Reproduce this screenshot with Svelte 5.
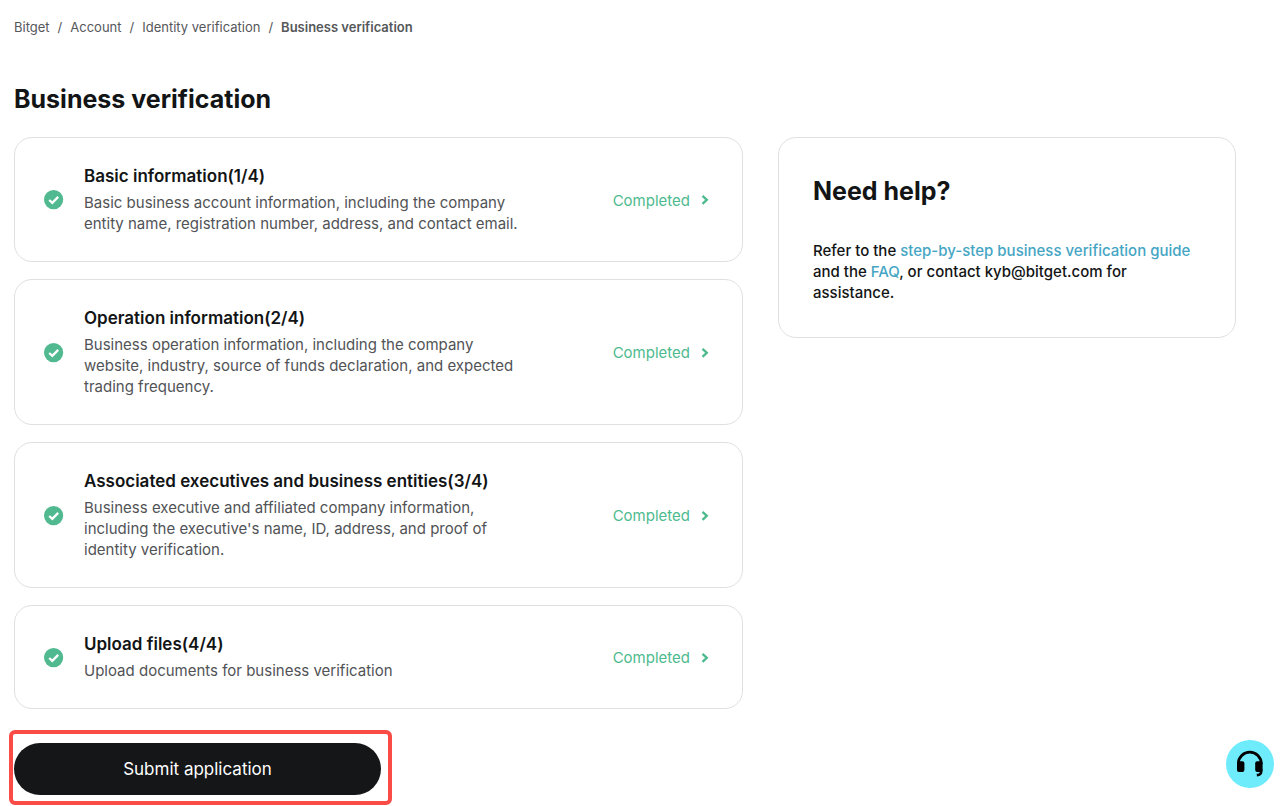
<script>
const crumbs = ['Bitget', 'Account', 'Identity verification'];

const steps = [
    {
        title: 'Basic information(1/4)',
        text: 'Basic business account information, including the company entity name, registration number, address, and contact email.',
        status: 'Completed',
    },
    {
        title: 'Operation information(2/4)',
        text: 'Business operation information, including the company website, industry, source of funds declaration, and expected trading frequency.',
        status: 'Completed',
    },
    {
        title: 'Associated executives and business entities(3/4)',
        text: "Business executive and affiliated company information, including the executive's name, ID, address, and proof of identity verification.",
        status: 'Completed',
    },
    {
        title: 'Upload files(4/4)',
        text: 'Upload documents for business verification',
        status: 'Completed',
    },
]
</script>

<div class="page">
    <nav class="crumbs" aria-label="Breadcrumb">
        {#each crumbs as crumb}
            <a href="#top">{crumb}</a>
            <span>/</span>
        {/each}
        <strong>Business verification</strong>
    </nav>

    <h1>Business verification</h1>

    <div class="columns">
        <main>
            {#each steps as step}
                <section class="card step">
                    <svg class="check" viewBox="0 0 20 20" aria-hidden="true">
                        <circle cx="9.6" cy="9.6" r="9.6" fill="#50b990" />
                        <path d="M5.2 10 8.3 12.8 14.2 6.9" fill="none" stroke="#fff" stroke-width="2.3" />
                    </svg>
                    <div class="info">
                        <h2>{step.title}</h2>
                        <p>{step.text}</p>
                    </div>
                    <a class="status" href="#step">
                        {step.status}
                        <svg viewBox="0 0 8 12" aria-hidden="true">
                            <path d="M1.5 1.8 5.8 5.8 1.5 9.8" fill="none" stroke="currentColor" stroke-width="2.3" />
                        </svg>
                    </a>
                </section>
            {/each}

            <div class="submit">
                <button type="button">Submit application</button>
            </div>
        </main>

        <aside class="card help">
            <h2>Need help?</h2>
            <p>
                Refer to the <a href="#guide">step-by-step business verification guide</a> and the
                <a href="#faq">FAQ</a>, or contact kyb@bitget.com for assistance.
            </p>
        </aside>
    </div>

    <button class="support" type="button" aria-label="Support">
        <svg viewBox="0 0 28 28" aria-hidden="true">
            <path d="M2.4 14V13.4a11.4 11.2 0 0 1 22.8 0V14" fill="none" stroke="#000" stroke-width="2.8" />
            <rect x="1" y="11.2" width="7.4" height="10.8" rx="2" />
            <rect x="19.2" y="11.2" width="7.4" height="10.8" rx="2" />
            <path d="M25.2 19v2.4q0 3.3-4.4 3.7" fill="none" stroke="#000" stroke-width="2.6" />
        </svg>
    </button>
</div>

<style>
:global(body) {
    margin: 0;
    background: #fff;
}
.page {
    padding: 18px 44px 10px 14px;
    font-family: Inter, "Liberation Sans", sans-serif;
    font-size: 15px;
    line-height: 21px;
    color: #121415;
}
h1, h2, p {
    margin: 0;
}
a {
    color: inherit;
    text-decoration: none;
}
.crumbs {
    display: flex;
    gap: 8px;
    font-size: 13px;
    line-height: 18px;
    color: #55575a;
}
.crumbs strong {
    font-weight: 600;
}
h1 {
    margin: 46px 0 21px;
    font-size: 25px;
    line-height: 34px;
    font-weight: 700;
}
.columns {
    display: grid;
    grid-template-columns: 729fr 458fr;
    gap: 35px;
    align-items: start;
}
main {
    display: flex;
    flex-direction: column;
    gap: 17px;
}
.card {
    box-sizing: border-box;
    border: 1px solid #dfe0e2;
    border-radius: 18px;
}
.step {
    display: flex;
    align-items: center;
    padding: 27px 33px 26px 29px;
}
.check {
    flex: none;
    width: 20px;
    height: 20px;
    margin-right: 20px;
}
.info {
    max-width: 440px;
}
.info h2 {
    margin-bottom: 4px;
    font-size: 17px;
    line-height: 23px;
    font-weight: 600;
}
.info p {
    padding-bottom: 1px;
    color: #515356;
}
.status {
    display: flex;
    align-items: center;
    gap: 11px;
    margin-left: auto;
    color: #4dba8e;
}
.status svg {
    width: 8px;
    height: 12px;
}
.help {
    padding: 34px;
}
.help h2 {
    margin-bottom: 30px;
    font-size: 25px;
    line-height: 38px;
    font-weight: 700;
}
.help p {
    font-weight: 500;
}
.help a {
    color: #45a5c4;
}
.submit {
    position: relative;
    width: 367px;
    margin-top: 17px;
}
/* highlight frame over the button */
.submit::after {
    content: "";
    position: absolute;
    inset: -13px -11px -10px -5px;
    border: 4px solid #fa4b47;
    border-radius: 6px;
    pointer-events: none;
}
.submit button {
    display: block;
    width: 100%;
    height: 52px;
    border: 0;
    border-radius: 26px;
    background: #151618;
    color: #fff;
    font-family: inherit;
    font-size: 17px;
}
.support {
    position: fixed;
    right: 6px;
    bottom: 18px;
    display: flex;
    align-items: center;
    justify-content: center;
    width: 48px;
    height: 48px;
    padding: 0;
    border: 0;
    border-radius: 50%;
    background: #6eecfc;
}
.support svg {
    width: 28px;
    height: 28px;
}
</style>
